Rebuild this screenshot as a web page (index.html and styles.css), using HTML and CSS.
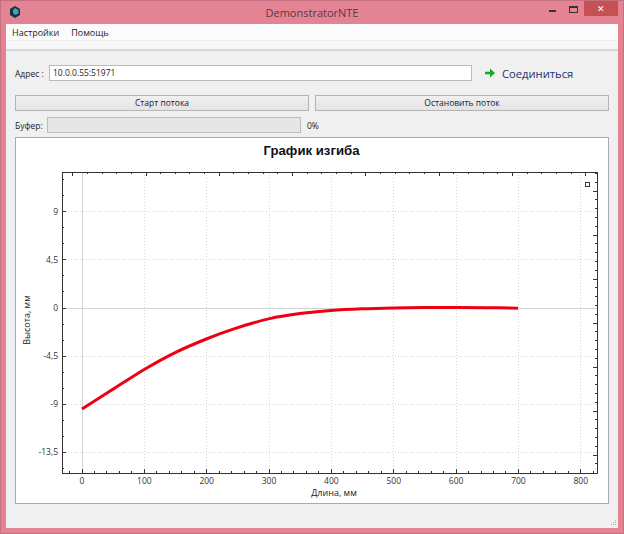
FILE: index.html
```html
<!DOCTYPE html>
<html lang="en">
<head>
  <meta charset="UTF-8">
  <title>DemonstratorNTE</title>
  <link rel="stylesheet" href="styles.css">
</head>
<body>
  <div class="window">
    <div class="titlebar">
      <svg class="app-icon" width="12" height="12" viewBox="0 0 12 12">
        <path d="M6 0 L11 3 L11 9 L6 12 L1 9 L1 3 Z" fill="#17323f"/>
        <path d="M6 2 L9.5 4 L9.5 7.5 L6 9 L4 7 L4 4 Z" fill="#4a9bc0"/>
      </svg>
      <div class="title">DemonstratorNTE</div>
      <div class="win-buttons">
        <div class="win-btn"><span class="min-glyph"></span></div>
        <div class="win-btn"><span class="max-glyph"></span></div>
        <div class="win-btn win-close">&#x2715;</div>
      </div>
    </div>
    <div class="client">
      <div class="menubar">
        <div class="menu-item">Настройки</div>
        <div class="menu-item">Помощь</div>
      </div>
      <div class="toolbar"></div>
      <div class="content">
        <div class="row-address">
          <label class="lbl">Адрес :</label>
          <div class="input">10.0.0.55:51971</div>
          <div class="connect">
            <svg width="12" height="12" viewBox="0 0 12 12">
              <path d="M1 4.7 H6 V1.5 L11 6 L6 10.5 V7.3 H1 Z" fill="#14a82a"/>
            </svg>
            <span>Соединиться</span>
          </div>
        </div>
        <div class="row-buttons">
          <div class="tombol">Старт потока</div>
          <div class="tombol">Остановить поток</div>
        </div>
        <div class="row-buffer">
          <label class="lbl">Буфер:</label>
          <div class="progress"></div>
          <span class="percent">0%</span>
        </div>
        <div class="plot-frame">
          <svg id="plot" width="592" height="365" viewBox="0 0 592 365"></svg>
        </div>
      </div>
      <svg class="grip" width="7" height="7" viewBox="0 0 7 7">
        <rect x="5" y="0" width="1" height="1"/>
        <rect x="3" y="2" width="1" height="1"/>
        <rect x="5" y="2" width="1" height="1"/>
        <rect x="1" y="4" width="1" height="1"/>
        <rect x="3" y="4" width="1" height="1"/>
        <rect x="5" y="4" width="1" height="1"/>
      </svg>
    </div>
  </div>
  <script>
    // plot coordinates are page pixels minus the frame offset
    const svg = document.getElementById('plot');
    const ox = 16, oy = 138;
    const L = 62 - ox, R = 597 - ox, T = 172 - oy, B = 473 - oy;
    const px = v => 82 - ox + v * 0.6235;
    const py = v => 308 - oy - v * 10.67;
    let s = '';

    const line = (x1, y1, x2, y2, cls) => {
      s += `<line x1="${x1}" y1="${y1}" x2="${x2}" y2="${y2}" class="${cls}"/>`;
    };
    const text = (x, y, t, cls) => {
      s += `<text x="${x}" y="${y}" class="${cls}">${t}</text>`;
    };

    text(295.5, 17, 'График изгиба', 'plot-title');

    // grid
    for (let v = 100; v <= 800; v += 100) line(px(v), T, px(v), B, 'grid');
    [9, 4.5, -4.5, -9, -13.5].forEach(v => line(L, py(v), R, py(v), 'grid'));
    line(px(0), T, px(0), B, 'zero');
    line(L, py(0), R, py(0), 'zero');

    // bottom and left axes follow the data
    for (let v = -20; v <= 820; v += 20) {
      const x = px(v);
      if (x < L || x > R) continue;
      line(x, B, x, B - (v % 100 === 0 ? 4 : 2), 'tick');
    }
    for (let v = -15; v <= 13; v += 1.5) {
      const y = py(v);
      if (y < T || y > B) continue;
      line(L, y, L + (Math.abs(v % 4.5) < 0.01 ? 4 : 2), y, 'tick');
    }
    // top and right axes have their own scale
    for (let i = -1; i < 36; i++) {
      const x = 72.7 - ox + i * 14.66;
      if (x < L || x > R) continue;
      line(x, T, x, T + (i % 5 === 0 ? 4 : 2), 'tick');
    }
    for (let i = -4; i < 32; i++) {
      const y = 191 - oy + i * 8.8;
      if (y < T || y > B) continue;
      line(R, y, R - (i % 5 === 0 ? 4 : 2), y, 'tick');
    }
    s += `<rect x="${L}" y="${T}" width="${R - L}" height="${B - T}" class="axes"/>`;

    // labels
    for (let v = 0; v <= 800; v += 100) text(px(v), B + 11, v, 'lab-x');
    [[9, '9'], [4.5, '4,5'], [0, '0'], [-4.5, '-4,5'], [-9, '-9'], [-13.5, '-13,5']].forEach(p => {
      text(L - 4, py(p[0]) + 3, p[1], 'lab-y');
    });
    text(318, 358, 'Длина, мм', 'axis-name');
    s += `<text transform="translate(14 182) rotate(-90)" class="axis-name">Высота, мм</text>`;

    // curve in page pixels, smoothed with catmull-rom
    const pts = [[82, 409], [111.3, 390.3], [144.7, 369.2], [174.7, 352.8], [206.3, 339], [234.7, 328.6], [269.7, 318.6],
      [300, 313.6], [331, 310.5], [362, 308.8], [393, 307.9], [425, 307.5], [456, 307.4], [487, 307.7], [518, 308.2]]
      .map(p => [p[0] - ox, p[1] - oy]);
    let d = `M${pts[0][0]} ${pts[0][1]}`;
    for (let i = 0; i < pts.length - 1; i++) {
      const a = pts[Math.max(i - 1, 0)], b = pts[i], c = pts[i + 1], e = pts[Math.min(i + 2, pts.length - 1)];
      d += ` C${b[0] + (c[0] - a[0]) / 6} ${b[1] + (c[1] - a[1]) / 6} ${c[0] - (e[0] - b[0]) / 6} ${c[1] - (e[1] - b[1]) / 6} ${c[0]} ${c[1]}`;
    }
    s += `<path class="curve" d="${d}"/>`;

    s += `<rect x="${585.5 - ox}" y="${182.5 - oy}" width="3.5" height="3.5" class="marker"/>`;
    svg.innerHTML = s;
  </script>
</body>
</html>
```

FILE: styles.css
```css
html, body {
  margin: 0;
  padding: 0;
  height: 100%;
}

body {
  font-family: "Open Sans", "Liberation Sans", sans-serif;
  font-size: 8.5px;
  color: #222;
  overflow: hidden;
}

.window {
  width: 624px;
  height: 534px;
  box-sizing: border-box;
  background: #e48393;
  border: solid 1px #c4707e;
  padding: 0 5px 5px 5px;
  display: flex;
  flex-direction: column;
}

.titlebar {
  height: 23px;
  display: flex;
  align-items: center;
  position: relative;
}

.app-icon {
  margin-left: 3px;
  margin-top: -1px;
}

.title {
  position: absolute;
  left: 0;
  right: 0;
  top: 4px;
  text-align: center;
  font-size: 11px;
  color: #5a3a42;
}

.win-buttons {
  margin-left: auto;
  display: flex;
  height: 15px;
  align-self: flex-start;
}

.win-btn {
  width: 21px;
  height: 15px;
  display: flex;
  align-items: center;
  justify-content: center;
  color: #fff;
  font-size: 9px;
}

.win-close {
  width: 34px;
  background: #c75050;
}

.min-glyph {
  width: 7px;
  height: 2px;
  background: #333;
  margin-top: 5px;
}

.max-glyph {
  width: 7px;
  height: 4px;
  border: solid 1px #333;
  border-top-width: 2px;
  margin-top: 2px;
}

.client {
  flex: 1;
  background: #f0f0f0;
  display: flex;
  flex-direction: column;
  position: relative;
}

.menubar {
  height: 16px;
  background: #fbfbfb;
  display: flex;
  gap: 12px;
  padding-left: 6px;
  align-items: center;
  font-size: 9px;
  color: #1c1c1c;
}

.toolbar {
  height: 8px;
  background: #f7f7f7;
  border-top: solid 1px #eee;
  border-bottom: solid 2px #d6d6d6;
}

.content {
  flex: 1;
  padding: 14px 9px 0 9px;
  display: flex;
  flex-direction: column;
}

.lbl {
  color: #222;
}

.row-address {
  display: flex;
  align-items: center;
  height: 16px;
}

.row-address .lbl {
  width: 34px;
}

.input {
  width: 418px;
  height: 14px;
  background: #fff;
  border: solid 1px #bbb;
  line-height: 14px;
  padding-left: 3px;
}

.connect {
  display: flex;
  align-items: center;
  gap: 6px;
  margin-left: 12px;
  font-size: 11.2px;
  color: #1f2f6b;
}

.row-buttons {
  display: flex;
  gap: 6px;
  margin-top: 14px;
  width: 594px;
}

.tombol {
  flex: 1;
  height: 14px;
  line-height: 14px;
  text-align: center;
  background: linear-gradient(#f0f0f0, #e4e4e4);
  border: solid 1px #b4b4b4;
}

.row-buffer {
  display: flex;
  align-items: center;
  margin-top: 6px;
  height: 16px;
}

.row-buffer .lbl {
  width: 32px;
}

.progress {
  width: 252px;
  height: 14px;
  background: #e6e6e6;
  border: solid 1px #bcbcbc;
}

.percent {
  margin-left: 6px;
}

.plot-frame {
  margin-top: 4px;
  width: 592px;
  height: 365px;
  background: #fff;
  border: solid 1px #a8abb0;
}

#plot {
  display: block;
}

.grip {
  position: absolute;
  right: 1px;
  bottom: 1px;
  fill: #b0b0b0;
}

.plot-title {
  font-size: 13.2px;
  font-weight: bold;
  text-anchor: middle;
  fill: #111;
  font-family: "Liberation Sans", sans-serif;
}

.grid {
  stroke: #d4d4d4;
  stroke-width: 1;
  stroke-dasharray: 1 2;
  shape-rendering: crispEdges;
}

.zero {
  stroke: #d4d4d4;
  stroke-width: 1;
  shape-rendering: crispEdges;
}

.tick {
  stroke: #333;
  stroke-width: 1;
  shape-rendering: crispEdges;
}

.axes {
  fill: none;
  stroke: #333;
  stroke-width: 1;
  shape-rendering: crispEdges;
}

.lab-x {
  font-size: 8.5px;
  text-anchor: middle;
  fill: #333;
}

.lab-y {
  font-size: 8.5px;
  text-anchor: end;
  fill: #333;
}

.axis-name {
  font-size: 9px;
  text-anchor: middle;
  fill: #222;
}

.curve {
  fill: none;
  stroke: #ee0010;
  stroke-width: 3;
  stroke-linejoin: round;
}

.marker {
  fill: #fff;
  stroke: #333;
  stroke-width: 1;
  shape-rendering: crispEdges;
}
```
